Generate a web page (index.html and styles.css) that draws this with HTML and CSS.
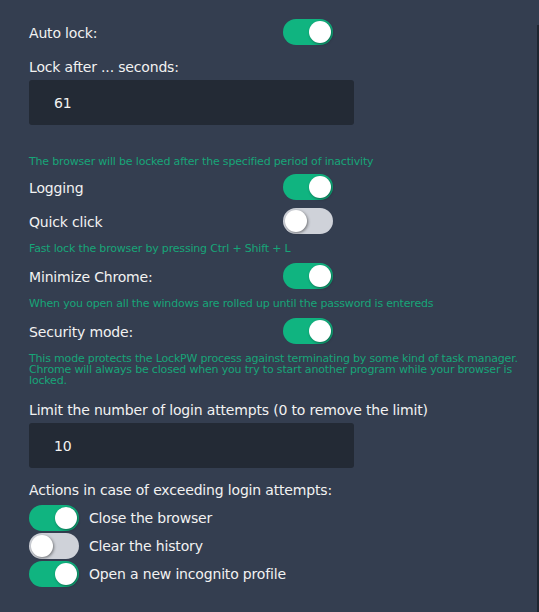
FILE: index.html
```html
<!DOCTYPE html>
<html lang="en">
<head>
    <meta charset="UTF-8">
    <meta name="viewport" content="width=device-width, initial-scale=1.0">
    <title>LockPW Settings</title>
    <link rel="stylesheet" href="styles.css">
</head>
<body>
    <div class="page">
        <div class="panel">
            <div class="row">
                <span class="label">Auto lock:</span>
                <label class="switch"><input type="checkbox" checked><span class="slider"></span></label>
            </div>

            <div class="field-label">Lock after ... seconds:</div>
            <input class="text-input" type="text" value="61">
            <p class="hint hint-first">The browser will be locked after the specified period of inactivity</p>

            <div class="row">
                <span class="label">Logging</span>
                <label class="switch"><input type="checkbox" checked><span class="slider"></span></label>
            </div>
            <div class="row">
                <span class="label">Quick click</span>
                <label class="switch"><input type="checkbox"><span class="slider"></span></label>
            </div>
            <p class="hint">Fast lock the browser by pressing Ctrl + Shift + L</p>

            <div class="row">
                <span class="label">Minimize Chrome:</span>
                <label class="switch"><input type="checkbox" checked><span class="slider"></span></label>
            </div>
            <p class="hint">When you open all the windows are rolled up until the password is entereds</p>

            <div class="row">
                <span class="label">Security mode:</span>
                <label class="switch"><input type="checkbox" checked><span class="slider"></span></label>
            </div>
            <p class="hint hint-long">This mode protects the LockPW process against terminating by some kind of task manager. Chrome will always be closed when you try to start another program while your browser is locked.</p>

            <div class="field-label limit-label">Limit the number of login attempts (0 to remove the limit)</div>
            <input class="text-input" type="text" value="10">

            <div class="field-label actions-label">Actions in case of exceeding login attempts:</div>
            <div class="actions">
                <label class="action">
                    <span class="switch"><input type="checkbox" checked><span class="slider"></span></span>
                    Close the browser
                </label>
                <label class="action">
                    <span class="switch"><input type="checkbox"><span class="slider"></span></span>
                    Clear the history
                </label>
                <label class="action">
                    <span class="switch"><input type="checkbox" checked><span class="slider"></span></span>
                    Open a new incognito profile
                </label>
            </div>
        </div>
        <div class="edge"></div>
    </div>
</body>
</html>
```

FILE: styles.css
```css
body {
    margin: 0;
    background-color: #343e50;
    color: #f2f2f2;
    font-family: 'DejaVu Sans', Verdana, sans-serif;
    font-size: 14px;
    letter-spacing: -0.17px;
}
.page {
    display: flex;
    min-height: 612px;
}
.panel {
    flex: 1;
    padding: 19px 0 0 29px;
}
/* dark line on the right side */
.edge {
    width: 2px;
    margin-top: 25px;
    background-color: #1f2631;
}
.row {
    display: flex;
    align-items: center;
    height: 26px;
    margin-top: 8px;
}
.row:first-child {
    margin-top: 0;
}
.row .label {
    width: 254px;
    line-height: 18px;
    padding-top: 1px;
}
.field-label {
    margin-top: 13px;
    line-height: 18px;
}
.limit-label {
    margin-top: 15px;
}
.actions-label {
    margin-top: 13px;
}
.text-input {
    display: block;
    box-sizing: border-box;
    width: 325px;
    height: 45px;
    margin-top: 4px;
    padding: 0 0 0 25px;
    border: none;
    border-radius: 3px;
    background-color: #232a35;
    color: #f2f2f2;
    font-family: inherit;
    font-size: 14px;
    letter-spacing: -0.17px;
    outline: none;
}
.hint {
    margin: 8px 0 7px;
    color: #17a578;
    font-size: 11px;
    line-height: 14px;
    letter-spacing: -0.18px;
}
.hint-first {
    margin-top: 30px;
    margin-bottom: 5px;
}
.hint + .row {
    margin-top: 0;
}
.hint-long {
    margin-top: 9px;
    margin-bottom: 0;
    padding-right: 2px;
    line-height: 11px;
}
/* toggle switch */
.switch {
    position: relative;
    display: inline-block;
    flex: none;
    width: 50px;
    height: 26px;
}
.switch input {
    display: none;
}
.slider {
    position: absolute;
    inset: 0;
    border-radius: 13px;
    background-color: #cfd2d9;
    cursor: pointer;
    transition: background-color 0.3s;
}
.slider::before {
    content: "";
    position: absolute;
    top: 2px;
    left: 2px;
    width: 22px;
    height: 22px;
    border-radius: 50%;
    background-color: #fff;
    box-shadow: 1px 1px 3px rgba(0, 0, 0, 0.45);
    transition: transform 0.3s;
}
.switch input:checked + .slider {
    background-color: #10b480;
}
.switch input:checked + .slider::before {
    transform: translateX(24px);
}
.actions {
    display: flex;
    flex-direction: column;
    gap: 2px;
    margin-top: 6px;
}
.action {
    display: flex;
    align-items: center;
    gap: 10px;
    cursor: pointer;
}
```
